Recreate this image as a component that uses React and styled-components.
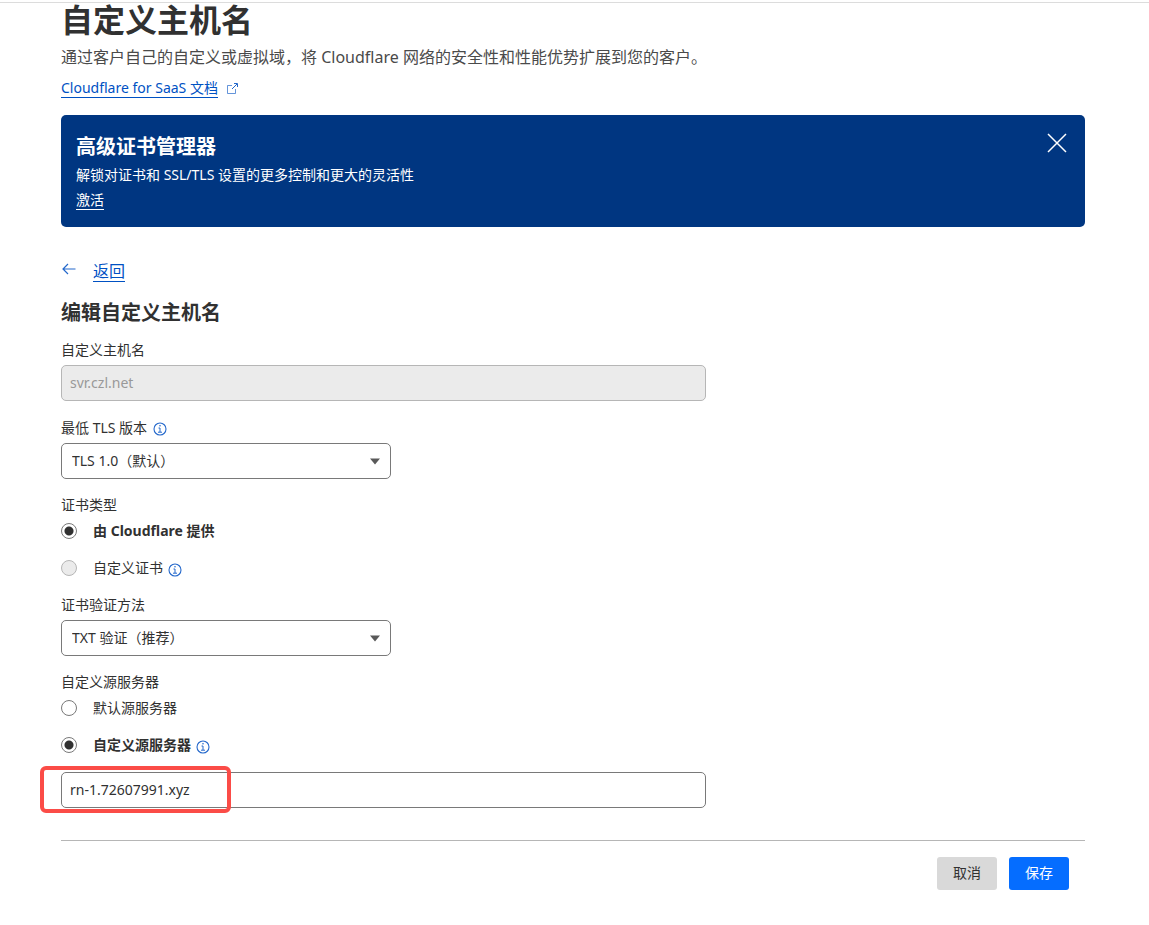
import React, { useState } from "react";
import styled, { createGlobalStyle } from "styled-components";

const colors = {
  text: "#313131",
  muted: "#4a4a4a",
  link: "#0051c3",
  icon: "#2468cb",
  banner: "#003681",
  border: "#797979",
  disabled: "#ebebeb",
  primary: "#056dff",
  highlight: "#fb4c47",
};

const GlobalStyle = createGlobalStyle`
  * {
    box-sizing: border-box;
  }

  body {
    margin: 0;
    background: #fff;
    color: ${colors.text};
    font-family: "Noto Sans", "Noto Sans CJK SC", sans-serif;
    font-size: 14px;
    line-height: 20px;
  }

  button, input, select {
    font: inherit;
    color: inherit;
  }
`;

const TopRule = styled.div`
  margin-top: 2px;
  border-top: 1px solid #dcdcdc;
`;

const Page = styled.main`
  padding: 0 64px 32px 61px;
`;

const Title = styled.h1`
  margin: 0;
  font-size: 32px;
  line-height: 34px;
`;

const Subtitle = styled.p`
  margin: 8px 0 10px;
  font-size: 16px;
  line-height: 24px;
  color: ${colors.muted};
`;

const Link = styled.a`
  display: inline-block;
  border-bottom: 1px solid currentColor;
  color: ${({ $light }) => ($light ? "#fff" : colors.link)};
  font-size: ${({ $large }) => ($large ? "16px" : "14px")};
  line-height: ${({ $large }) => ($large ? "20px" : "18px")};
  text-decoration: none;
`;

const DocsRow = styled.div`
  display: flex;
  align-items: center;
  gap: 9px;
`;

const Banner = styled.section`
  display: flex;
  justify-content: space-between;
  align-items: flex-start;
  margin-top: 17px;
  padding: 18px 16px 17px 15px;
  border-radius: 5px;
  background: ${colors.banner};
  color: #fff;

  h2 {
    margin: 2px 0 6px;
    font-size: 20px;
    line-height: 24px;
  }

  p {
    margin: 0 0 6px;
  }
`;

const BannerLink = styled(Link)`
  display: table;
`;

const CloseButton = styled.button`
  display: flex;
  padding: 0;
  border: 0;
  background: none;
  cursor: pointer;
`;

const BackRow = styled.div`
  display: flex;
  gap: 16px;
  margin-top: 34px;

  svg {
    margin-top: 1px;
  }
`;

const Heading = styled.h2`
  margin: 17px 0 13px;
  font-size: 20px;
  line-height: 28px;
`;

const Field = styled.div`
  margin-bottom: 16px;
`;

const Group = styled.fieldset`
  min-width: 0;
  margin: 0;
  padding: 0;
  border: 0;

  legend {
    padding: 0;
    margin-bottom: 6px;
  }
`;

const LabelRow = styled.div`
  display: flex;
  align-items: center;
  gap: 6px;
  margin-bottom: 5px;

  button {
    margin: 5px 0 2px;
  }
`;

const TextInput = styled.input`
  display: block;
  width: 63%;
  height: 36px;
  padding: 0 8px 2px;
  border: 1px solid ${colors.border};
  border-radius: 5px;
  background: #fff;

  &:disabled {
    border-color: #b6b6b6;
    background: ${colors.disabled};
    color: #999;
  }
`;

const SelectBox = styled.div`
  position: relative;
  width: 330px;
  max-width: 100%;

  select {
    display: block;
    width: 100%;
    height: 36px;
    padding: 0 32px 0 10px;
    border: 1px solid ${colors.border};
    border-radius: 5px;
    background: #fff;
    appearance: none;
  }

  svg {
    position: absolute;
    right: 10px;
    top: 15px;
    pointer-events: none;
  }
`;

const Option = styled.div`
  display: flex;
  align-items: center;
  margin-bottom: 17px;

  label {
    margin-left: 16px;
    font-weight: ${({ $checked }) => ($checked ? 700 : 400)};
  }
`;

const Radio = styled.input`
  flex: none;
  width: 16px;
  height: 16px;
  margin: 0;
  border: 1px solid ${colors.border};
  border-radius: 50%;
  background: #fff;
  appearance: none;

  &:checked {
    background: radial-gradient(circle, ${colors.text} 4px, #fff 5px);
  }

  &:disabled {
    border-color: #b6b6b6;
    background: ${colors.disabled};
  }
`;

const InfoButton = styled.button`
  display: flex;
  margin: 4px 0 0 ${({ $spaced }) => ($spaced ? "5px" : "0")};
  padding: 0;
  border: 0;
  background: none;
  color: ${colors.icon};
`;

const OriginField = styled.div`
  position: relative;
`;

// red frame drawing attention to the origin host
const Highlight = styled.span`
  position: absolute;
  top: -6px;
  left: -21px;
  width: 191px;
  height: 47px;
  border: 4px solid ${colors.highlight};
  border-radius: 6px;
  pointer-events: none;
`;

const Actions = styled.footer`
  display: flex;
  justify-content: flex-end;
  gap: 12px;
  margin-top: 32px;
  padding: 16px 16px 0;
  border-top: 1px solid #b6b6b6;
`;

const Button = styled.button`
  height: 33px;
  padding: 0 16px 2px;
  border: 0;
  border-radius: 3px;
  background: ${({ $primary }) => ($primary ? colors.primary : "#d9d9d9")};
  color: ${({ $primary }) => ($primary ? "#fff" : colors.text)};
  cursor: pointer;
`;

const ExternalIcon = () => (
  <svg width="11" height="11" viewBox="0 0 11 11" fill="none" stroke={colors.icon} aria-hidden="true">
    <path d="M5 2.5H.5v8h8V6" strokeOpacity=".7" />
    <path d="M5 6l5-5M7 .5h3.5V4" />
  </svg>
);

const BackIcon = () => (
  <svg width="16" height="14" viewBox="0 0 16 14" fill="none" stroke={colors.icon} strokeWidth="1.2" aria-hidden="true">
    <path d="M14.5 7H2M7 2L2 7l5 5" />
  </svg>
);

const CloseIcon = () => (
  <svg width="24" height="20" viewBox="0 0 24 20" fill="none" stroke="#fff" strokeWidth="1.5" aria-hidden="true">
    <path d="M3 1l18 18M21 1L3 19" />
  </svg>
);

const Info = ({ spaced }) => (
  <InfoButton type="button" aria-label="更多信息" $spaced={spaced}>
    <svg width="14" height="14" viewBox="0 0 14 14" fill="none" stroke="currentColor" aria-hidden="true">
      <circle cx="7" cy="7" r="6" strokeWidth="1.1" />
      <path d="M5.5 6H7v4M5 10.2h4" />
      <circle cx="7" cy="3.8" r=".8" fill="currentColor" stroke="none" />
    </svg>
  </InfoButton>
);

const Select = ({ id, children }) => (
  <SelectBox>
    <select id={id}>{children}</select>
    <svg width="11" height="7" viewBox="0 0 11 7" aria-hidden="true">
      <path d="M0 .5h10l-5 6z" fill="#595959" />
    </svg>
  </SelectBox>
);

const RadioOption = ({ id, name, label, checked, disabled, onSelect, info }) => (
  <Option $checked={checked}>
    <Radio type="radio" id={id} name={name} checked={checked} disabled={disabled} onChange={onSelect} />
    <label htmlFor={id}>{label}</label>
    {info && <Info spaced />}
  </Option>
);

const App = () => {
  const [origin, setOrigin] = useState("custom");
  const [host, setHost] = useState("rn-1.72607991.xyz");
  const [showBanner, setShowBanner] = useState(true);

  return (
    <>
      <GlobalStyle />
      <TopRule />
      <Page>
        <Title>自定义主机名</Title>
        <Subtitle>通过客户自己的自定义或虚拟域，将 Cloudflare 网络的安全性和性能优势扩展到您的客户。</Subtitle>
        <DocsRow>
          <Link href="#docs">Cloudflare for SaaS 文档</Link>
          <ExternalIcon />
        </DocsRow>

        {showBanner && (
          <Banner>
            <div>
              <h2>高级证书管理器</h2>
              <p>解锁对证书和 SSL/TLS 设置的更多控制和更大的灵活性</p>
              <BannerLink href="#activate" $light>激活</BannerLink>
            </div>
            <CloseButton type="button" aria-label="关闭" onClick={() => setShowBanner(false)}>
              <CloseIcon />
            </CloseButton>
          </Banner>
        )}

        <BackRow>
          <BackIcon />
          <Link href="#back" $large>返回</Link>
        </BackRow>

        <form onSubmit={(e) => e.preventDefault()}>
          <Heading>编辑自定义主机名</Heading>

          <Field>
            <LabelRow>
              <label htmlFor="hostname">自定义主机名</label>
            </LabelRow>
            <TextInput id="hostname" defaultValue="svr.czl.net" disabled />
          </Field>

          <Field>
            <LabelRow>
              <label htmlFor="tls">最低 TLS 版本</label>
              <Info />
            </LabelRow>
            <Select id="tls">
              <option>TLS 1.0（默认）</option>
            </Select>
          </Field>

          <Group>
            <legend>证书类型</legend>
            <RadioOption id="cert-cf" name="cert" label="由 Cloudflare 提供" checked onSelect={() => {}} />
            <RadioOption id="cert-custom" name="cert" label="自定义证书" checked={false} disabled info />
          </Group>

          <Field>
            <LabelRow>
              <label htmlFor="validation">证书验证方法</label>
            </LabelRow>
            <Select id="validation">
              <option>TXT 验证（推荐）</option>
            </Select>
          </Field>

          <Group>
            <legend>自定义源服务器</legend>
            <RadioOption
              id="origin-default"
              name="origin"
              label="默认源服务器"
              checked={origin === "default"}
              onSelect={() => setOrigin("default")}
            />
            <RadioOption
              id="origin-custom"
              name="origin"
              label="自定义源服务器"
              checked={origin === "custom"}
              onSelect={() => setOrigin("custom")}
              info
            />
            <OriginField>
              <TextInput aria-label="自定义源服务器" value={host} onChange={(e) => setHost(e.target.value)} />
              <Highlight />
            </OriginField>
          </Group>

          <Actions>
            <Button type="button">取消</Button>
            <Button type="submit" $primary>保存</Button>
          </Actions>
        </form>
      </Page>
    </>
  );
};

export default App;
